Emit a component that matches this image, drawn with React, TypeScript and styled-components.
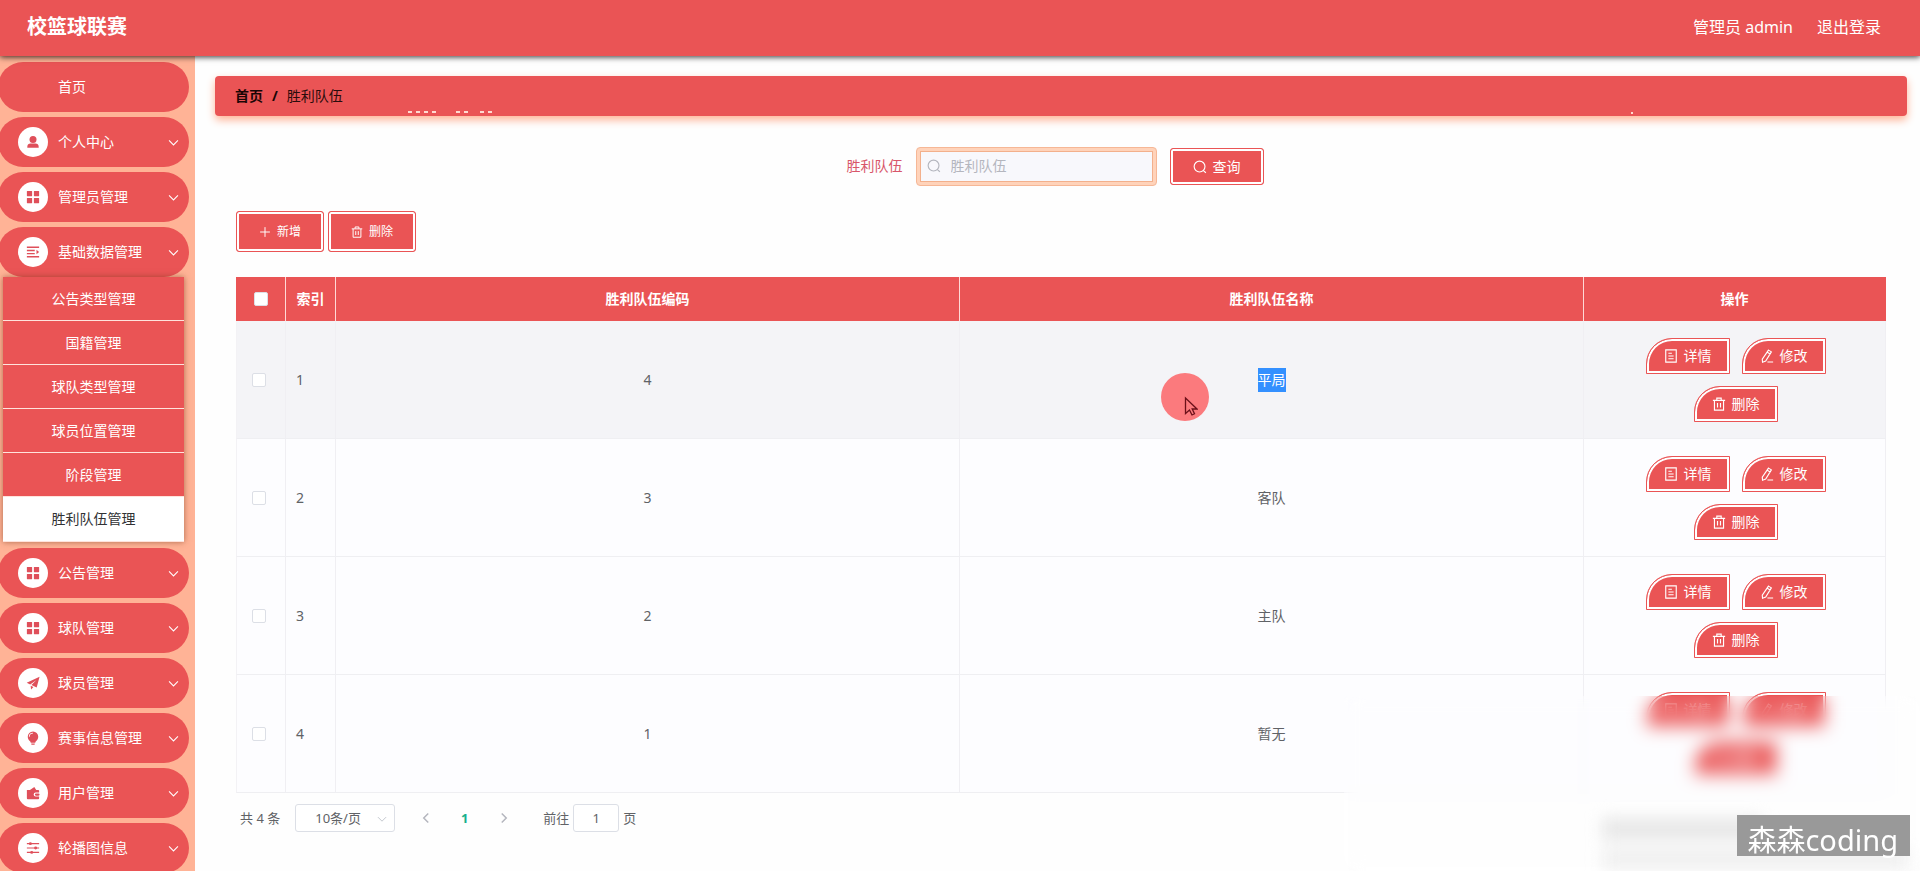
import React from 'react';
import styled, { createGlobalStyle, css } from 'styled-components';

const RED = '#ea5455';
const PEACH = '#ffb396';

const GlobalStyle = createGlobalStyle`
  *, *::before, *::after { box-sizing: border-box; }
  body {
    margin: 0;
    background: #fefefe;
    color: #606266;
    font-family: "Noto Sans", "Noto Sans CJK SC", sans-serif;
    font-size: 14px;
    line-height: 20px;
  }
  button, input, select { font: inherit; }
  a { color: inherit; text-decoration: none; }
`;

/* ---------- icons ---------- */

type IconName =
  | 'user' | 'grid' | 'lines' | 'plane' | 'bulb' | 'wallet' | 'sliders'
  | 'down' | 'left' | 'right' | 'search' | 'plus' | 'trash' | 'doc' | 'edit';

const solid = { fill: 'currentColor', stroke: 'none' };

const shapes: Record<IconName, React.ReactNode> = {
  user: (
    <g {...solid}>
      <circle cx="8" cy="5" r="4" />
      <path d="M1.5 14.5v-1.2c0-2.2 1.6-3.6 3.6-3.6h5.8c2 0 3.6 1.4 3.6 3.6v1.2z" />
    </g>
  ),
  grid: (
    <g {...solid}>
      <rect x="1" y="1" width="6" height="6" rx=".5" />
      <rect x="9" y="1" width="6" height="6" rx=".5" />
      <rect x="1" y="9" width="6" height="6" rx=".5" />
      <rect x="9" y="9" width="6" height="6" rx=".5" />
    </g>
  ),
  lines: (
    <g>
      <path d="M1 2.5h14M1 6.2h9M1 9.8h9M1 13.5h14" strokeWidth="1.6" />
      <path d="M12 5.5 15 8l-3 2.5z" {...solid} />
    </g>
  ),
  plane: (
    <g {...solid}>
      <path d="M15.5.8.8 7.6l4 2L12 4.5 6.2 10.4l6 2.8z" />
      <path d="m5.3 11 3.2 1.5-2.7 2.8z" />
    </g>
  ),
  bulb: (
    <g {...solid}>
      <path d="M8 .6a6 6 0 0 0-6 6c0 2.500 1.400 3.900 2.600 5.200.6.600.8 1.200.8 1.700h5.200c0-.5.200-1.100.8-1.700C12.600 10.500 14 9.100 14 6.600a6 6 0 0 0-6-6zM4.300 6.600h-1A4.700 4.700 0 0 1 8 1.900v1a3.700 3.700 0 0 0-3.700 3.700z" />
      <path d="M6 14.200h4v.6c0 .600-.5 1-1 1H7c-.5 0-1-.4-1-1z" />
    </g>
  ),
  wallet: (
    <g {...solid}>
      <path d="M1 4.500h3.500L9.500 1l2.200 3.500H14c.6 0 1 .4 1 1v2h-4a2.200 2.200 0 0 0 0 4.500h4v2c0 .6-.4 1-1 1H2c-.6 0-1-.4-1-1z" />
      <rect x="10.200" y="8.600" width="5.300" height="2.400" rx="1.200" />
    </g>
  ),
  sliders: (
    <g>
      <path d="M1 3h14M1 8h14M1 13h14" strokeWidth="1.2" />
      <circle cx="5" cy="3" r="1.700" {...solid} />
      <circle cx="11" cy="8" r="1.700" {...solid} />
      <circle cx="6.500" cy="13" r="1.700" {...solid} />
    </g>
  ),
  down: <path d="m1.500 5 6.500 6.500L14.500 5" strokeWidth="1.500" />,
  left: <path d="M11 2 5 8l6 6" strokeWidth="2" />,
  right: <path d="m5 2 6 6-6 6" strokeWidth="2" />,
  search: <path d="M13.700 7.500a6.200 6.200 0 1 1-12.400 0 6.200 6.200 0 0 1 12.400 0zM12 12l2.700 2.800" strokeWidth="1.300" />,
  plus: <path d="M8 1.500v13M1.500 8h13" strokeWidth="1.300" />,
  trash: <path d="M1 3.800h14M5.500 3.500V1.300h5v2.200M2.800 4v11h10.400V4M6.300 6.800v5.200M9.700 6.800v5.200" strokeWidth="1.300" />,
  doc: <path d="M2 1h12v14H2zM5 4.800h4M5 8h6M5 11.200h6" strokeWidth="1.300" />,
  edit: <path d="m9.700 1.300 3.300 2-6.500 10.500-3.600 1.300-.3-3.600zM8.300 3.700l3.300 2M8.500 14.900H15" strokeWidth="1.300" />,
};

const Svg = styled.svg<{ $size: number }>`
  width: ${(p) => p.$size}px;
  height: ${(p) => p.$size}px;
  flex: none;
  fill: none;
  stroke: currentColor;
`;

const Icon = ({ name, size = 14 }: { name: IconName; size?: number }) => (
  <Svg $size={size} viewBox="0 0 16 16" aria-hidden="true">{shapes[name]}</Svg>
);

/* ---------- frame ---------- */

const Page = styled.div`
  position: relative;
  display: flex;
  flex-direction: column;
  height: 100vh;
  overflow: hidden;
`;

const Header = styled.header`
  position: relative;
  z-index: 1;
  display: flex;
  flex: none;
  align-items: center;
  justify-content: space-between;
  height: 56px;
  padding: 0 39px 2px 27px;
  background: ${RED};
  box-shadow: 0 1px 6px rgba(0, 0, 0, 0.8);
  color: #fff;
`;

const Brand = styled.h1`
  margin: 0;
  font-size: 20px;
  line-height: 28px;
  font-weight: 700;
`;

const Account = styled.div`
  display: flex;
  gap: 24px;
  font-size: 16px;
  line-height: 24px;
`;

const Body = styled.div`
  display: flex;
  flex: 1;
  min-height: 0;
`;

const Sidebar = styled.nav`
  flex: none;
  width: 195px;
  padding-top: 6px;
  overflow: hidden;
  background: ${PEACH};
`;

const MenuButton = styled.button`
  display: grid;
  grid-template-columns: 30px 1fr 10px;
  align-items: center;
  column-gap: 10px;
  width: 191px;
  height: 50px;
  margin: 0 0 5px -2px;
  padding: 0 11px 0 20px;
  border: 0;
  border-radius: 25px;
  background: ${RED};
  color: #fff;
  text-align: left;
`;

const MenuIcon = styled.span`
  display: flex;
  align-items: center;
  justify-content: center;
  width: 30px;
  height: 30px;
  border-radius: 50%;
  background: #fff;
  color: #df4f5a;
`;

const MenuText = styled.span`
  grid-column: 2;
`;

const SubMenu = styled.div`
  width: 181px;
  margin: -5px 0 6px 3px;
  background: #fff;
  box-shadow: 0 0 6px rgba(120, 60, 30, 0.6);
`;

const SubLink = styled.a<{ $active: boolean }>`
  display: flex;
  align-items: center;
  justify-content: center;
  height: ${(p) => (p.$active ? 45 : 44)}px;
  border-bottom: 1px solid #ffe3dc;
  background: ${(p) => (p.$active ? '#fff' : RED)};
  color: ${(p) => (p.$active ? '#303133' : '#fff')};
`;

const Main = styled.main`
  flex: 1;
  min-width: 0;
  padding: 20px 13px 0 20px;
`;

const Crumbs = styled.div`
  position: relative;
  display: flex;
  align-items: center;
  gap: 9px;
  height: 40px;
  padding: 0 20px;
  border-radius: 4px;
  background: ${RED};
  box-shadow: 0 4px 8px ${PEACH};
  color: #2a0c0c;

  strong { color: #1a0505; }
`;

const Specks = styled.svg`
  position: absolute;
  left: 0;
  bottom: 2px;
  width: 100%;
  height: 3px;
  fill: #ffd9cf;
`;

const Content = styled.section`
  padding: 30px 21px 0;
`;

/* ---------- search and buttons ---------- */

const SearchForm = styled.form`
  display: flex;
  align-items: center;
  justify-content: center;
  gap: 13px;
  height: 40px;
  padding-right: 12px;

  label { color: #d8566a; }
`;

const Field = styled.div`
  display: flex;
  align-items: center;
  gap: 10px;
  width: 241px;
  height: 39px;
  padding: 0 10px;
  border: 1px solid #f6b796;
  border-radius: 4px;
  background: #f8f8fc;
  box-shadow: inset 0 0 0 3px #ffd3ba, inset 0 0 0 4px #f3b08c;
  color: #b4b6be;

  input {
    width: 100%;
    padding: 0;
    border: 0;
    outline: 0;
    background: transparent;
  }
  input::placeholder { color: #b4b6be; }
`;

const Button = styled.button<{ $kind: 'search' | 'tool' | 'row' }>`
  display: inline-flex;
  align-items: center;
  justify-content: center;
  gap: 6px;
  padding: 0;
  border: 1px solid ${RED};
  background: ${RED};
  box-shadow: inset 0 0 0 2px #fff;
  color: #fff;
  ${(p) => p.$kind === 'search' && css`width: 94px; height: 37px; padding-top: 2px; border-radius: 3px;`}
  ${(p) => p.$kind === 'tool' && css`width: 88px; height: 41px; border-radius: 3px; font-size: 12px;`}
  ${(p) => p.$kind === 'row' && css`width: 84px; height: 36px; border-radius: 26px 0 0 0;`}
`;

const Toolbar = styled.div`
  display: flex;
  gap: 4px;
  padding: 25px 0;
`;

/* ---------- table ---------- */

const Table = styled.table`
  width: 100%;
  table-layout: fixed;
  border-collapse: separate;
  border-spacing: 0;
  text-align: center;

  th {
    height: 44px;
    padding: 0;
    border-right: 1px solid #ffd9d6;
    background: ${RED};
    color: #fff;
  }
  th:last-child { border-right-color: ${RED}; }
  td {
    height: 118px;
    padding: 0;
    border-right: 1px solid #f0eff3;
    border-bottom: 1px solid #efeff2;
    background: #fdfdff;
  }
  td:first-child { border-left: 1px solid #f3f2f5; }
`;

const Row = styled.tr<{ $hover: boolean }>`
  ${(p) => p.$hover && css`td { background: #f4f4f7; }`}

  td:first-child { padding-right: 4px; }
  td:nth-child(2) { padding-left: 10px; text-align: left; }
`;

const Check = styled.input`
  display: block;
  appearance: none;
  width: 14px;
  height: 14px;
  margin: 0 auto;
  border: 1px solid #dcdfe6;
  border-radius: 2px;
  background: #fff;
`;

const Marked = styled.span`
  display: inline-block;
  height: 24px;
  line-height: 24px;
  background: #3390ff;
  color: #fff;
`;

const Actions = styled.div`
  display: flex;
  flex-wrap: wrap;
  justify-content: center;
  gap: 12px;
  padding: 0 23px 0 25px;
`;

/* ---------- pagination ---------- */

const Pager = styled.div`
  display: flex;
  align-items: center;
  height: 28px;
  margin-top: 11px;
  padding-left: 4px;
  font-size: 13px;
`;

const SizeBox = styled.div`
  position: relative;
  width: 100px;
  height: 28px;
  margin: 0 16px 0 15px;
  color: #c0c4cc;

  select {
    width: 100%;
    height: 28px;
    padding: 0 30px 0 19px;
    appearance: none;
    border: 1px solid #dcdfe6;
    border-radius: 3px;
    background: #fff;
    color: #606266;
  }
  svg { position: absolute; right: 8px; top: 10px; pointer-events: none; }
`;

const PageButton = styled.button<{ $current?: boolean }>`
  display: flex;
  align-items: center;
  justify-content: center;
  width: 29px;
  height: 28px;
  margin-right: 10px;
  padding: 0;
  border: 0;
  background: transparent;
  color: ${(p) => (p.$current ? '#18b08c' : '#b4b6be')};
  font-weight: 700;
`;

const Jump = styled.label`
  display: flex;
  align-items: center;
  gap: 4px;
  margin-left: 15px;

  input {
    width: 46px;
    height: 28px;
    padding: 0;
    border: 1px solid #dcdfe6;
    border-radius: 3px;
    background: #fff;
    color: #606266;
    text-align: center;
  }
`;

/* ---------- layers over the page ---------- */

const Frost = styled.div`
  position: absolute;
  right: 0;
  bottom: 0;
  width: 30%;
  height: 175px;
  overflow: hidden;
  backdrop-filter: blur(9px);
  pointer-events: none;
`;

const Smudge = styled.div`
  display: flex;
  flex-direction: column;
  gap: 8px;
  margin: 122px 12px 0 258px;
  filter: blur(8px);

  span { height: 22px; background: #e7e7e7; }
  span:first-child { width: 160px; }
  span:last-child { background: #f0f0f0; }
`;

const Watermark = styled.div`
  position: absolute;
  right: 10px;
  bottom: 15px;
  height: 41px;
  padding: 0 12px 0 10px;
  background: #999;
  color: #fff;
  font-size: 29px;
  line-height: 50px;
`;

const Pointer = styled.div`
  position: absolute;
  left: 50%;
  top: 50%;
  width: 48px;
  height: 48px;
  margin: -7px 0 0 -111px;
  border-radius: 50%;
  background: #fb7a7d;
  pointer-events: none;

  svg { position: absolute; left: 23px; top: 23px; width: 14px; height: 21px; }
`;

const NameCell = styled.td`
  position: relative;
`;

const Menu = ({ icon, text }: { icon?: IconName; text: string }) => (
  <MenuButton type="button">
    {icon && <MenuIcon><Icon name={icon} /></MenuIcon>}
    <MenuText>{text}</MenuText>
    {icon && <Icon name="down" size={11} />}
  </MenuButton>
);

const subItems = ['公告类型管理', '国籍管理', '球队类型管理', '球员位置管理', '阶段管理', '胜利队伍管理'];

const topMenus: { icon?: IconName; text: string }[] = [
  { text: '首页' },
  { icon: 'user', text: '个人中心' },
  { icon: 'grid', text: '管理员管理' },
  { icon: 'lines', text: '基础数据管理' },
];

const lowerMenus: { icon: IconName; text: string }[] = [
  { icon: 'grid', text: '公告管理' },
  { icon: 'grid', text: '球队管理' },
  { icon: 'plane', text: '球员管理' },
  { icon: 'bulb', text: '赛事信息管理' },
  { icon: 'wallet', text: '用户管理' },
  { icon: 'sliders', text: '轮播图信息' },
];

const rows = [
  { code: 4, name: '平局' },
  { code: 3, name: '客队' },
  { code: 2, name: '主队' },
  { code: 1, name: '暂无' },
];

const NarrowCol = styled.col`
  width: 50px;
`;

const ActionCol = styled.col`
  width: 302px;
`;

export default function App() {
  return (
    <Page>
      <GlobalStyle />
      <Header>
        <Brand>校篮球联赛</Brand>
        <Account>
          <span>管理员 admin</span>
          <a href="#logout">退出登录</a>
        </Account>
      </Header>
      <Body>
        <Sidebar>
          {topMenus.map((m) => <Menu key={m.text} {...m} />)}
          <SubMenu>
            {subItems.map((t, i) => (
              <SubLink key={t} href="#list" $active={i === subItems.length - 1}>{t}</SubLink>
            ))}
          </SubMenu>
          {lowerMenus.map((m) => <Menu key={m.text} {...m} />)}
        </Sidebar>
        <Main>
          <Crumbs>
            <strong>首页</strong>
            <strong>/</strong>
            <span>胜利队伍</span>
            <Specks aria-hidden="true">
              {[193, 201, 209, 217, 241, 249, 265, 273].map((x) => (
                <rect key={x} x={x} y="0" width="4" height="2" />
              ))}
              <rect x="1416" y="1" width="2" height="2" />
            </Specks>
          </Crumbs>
          <Content>
            <SearchForm onSubmit={(e) => e.preventDefault()}>
              <label htmlFor="team">胜利队伍</label>
              <Field>
                <Icon name="search" />
                <input id="team" type="text" placeholder="胜利队伍" />
              </Field>
              <Button type="submit" $kind="search"><Icon name="search" />查询</Button>
            </SearchForm>
            <Toolbar>
              <Button type="button" $kind="tool"><Icon name="plus" size={12} />新增</Button>
              <Button type="button" $kind="tool"><Icon name="trash" size={12} />删除</Button>
            </Toolbar>
            <Table>
              <colgroup>
                <NarrowCol />
                <NarrowCol />
                <col />
                <col />
                <ActionCol />
              </colgroup>
              <thead>
                <tr>
                  <th><Check type="checkbox" aria-label="全选" /></th>
                  <th>索引</th>
                  <th>胜利队伍编码</th>
                  <th>胜利队伍名称</th>
                  <th>操作</th>
                </tr>
              </thead>
              <tbody>
                {rows.map((r, i) => (
                  <Row key={r.code} $hover={i === 0}>
                    <td><Check type="checkbox" aria-label={r.name} /></td>
                    <td>{i + 1}</td>
                    <td>{r.code}</td>
                    <NameCell>
                      {i === 0 ? <Marked>{r.name}</Marked> : r.name}
                      {i === 0 && (
                        <Pointer>
                          <svg viewBox="0 0 14 21" aria-hidden="true">
                            <path d="M1.500 2v15.500l4-3.500 2.500 5 2.500-1.200L8.200 13H13z" fill="none" stroke="#6b1019" strokeWidth="1.300" />
                          </svg>
                        </Pointer>
                      )}
                    </NameCell>
                    <td>
                      <Actions>
                        <Button type="button" $kind="row"><Icon name="doc" />详情</Button>
                        <Button type="button" $kind="row"><Icon name="edit" />修改</Button>
                        <Button type="button" $kind="row"><Icon name="trash" />删除</Button>
                      </Actions>
                    </td>
                  </Row>
                ))}
              </tbody>
            </Table>
            <Pager>
              <span>共 4 条</span>
              <SizeBox>
                <select aria-label="每页条数"><option>10条/页</option></select>
                <Icon name="down" size={10} />
              </SizeBox>
              <PageButton type="button" aria-label="上一页"><Icon name="left" size={12} /></PageButton>
              <PageButton type="button" $current>1</PageButton>
              <PageButton type="button" aria-label="下一页"><Icon name="right" size={12} /></PageButton>
              <Jump>前往<input type="text" defaultValue="1" />页</Jump>
            </Pager>
          </Content>
        </Main>
      </Body>
      <Frost><Smudge><span /><span /></Smudge></Frost>
      <Watermark>森森coding</Watermark>
    </Page>
  );
}
